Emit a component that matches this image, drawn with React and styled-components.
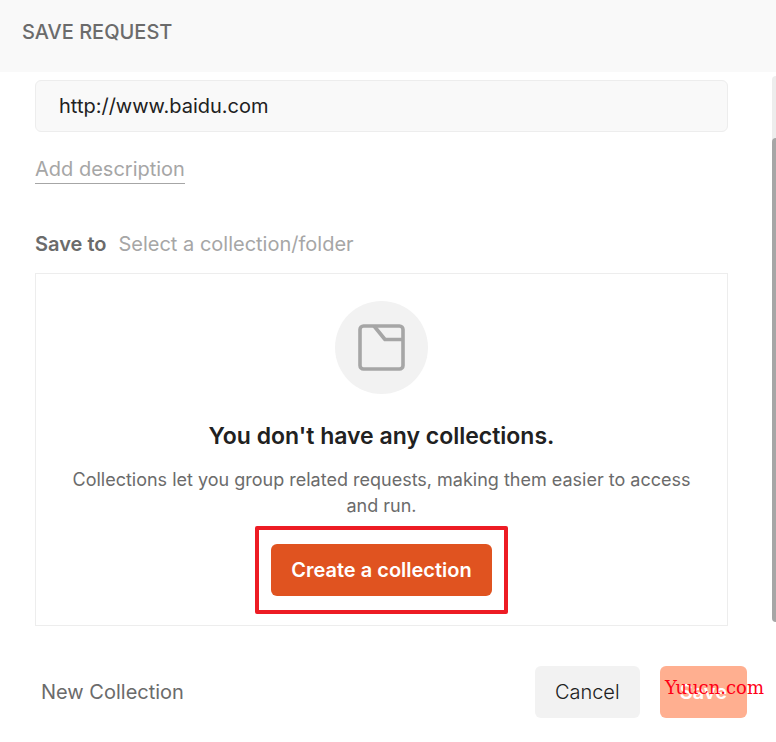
import React from "react";
import styled, { createGlobalStyle } from "styled-components";

const colors = {
	text: "#212121",
	textMuted: "#6b6b6b",
	textLight: "#a6a6a6",
	surface: "#f9f9f9",
	control: "#f2f2f2",
	border: "#ededed",
	brand: "#e05320",
	brandDisabled: "#ffaf90",
	mark: "#ed1c24",
};

const GlobalStyle = createGlobalStyle`
	*, *::before, *::after {
		box-sizing: border-box;
	}

	body {
		margin: 0;
		background: #fff;
		color: ${ colors.text };
		font-family: Inter, "Liberation Sans", sans-serif;
		font-size: 20px;
		line-height: 24px;
	}
`;

const Dialog = styled.main`
	overflow: hidden;
`;

const Header = styled.header`
	padding: 20px 22px 28px;
	background: ${ colors.surface };
`;

const HeaderTitle = styled.h1`
	margin: 0;
	font-size: 20px;
	font-weight: 500;
	line-height: 24px;
	color: ${ colors.textMuted };
`;

const Body = styled.div`
	display: flex;
	align-items: stretch;
`;

const Form = styled.form`
	flex: 1 1 auto;
	min-width: 0;
	padding: 8px 44px 0 35px;
`;

const ScrollTrack = styled.div`
	flex: 0 0 4px;
	display: flex;
	flex-direction: column;
	justify-content: flex-end;
	margin: 4px 0;
	border-radius: 4px 0 0 4px;
	background: ${ colors.border };
`;

const ScrollThumb = styled.div`
	height: calc( 100% - 62px );
	border-radius: 4px 0 0 4px;
	background: ${ colors.textLight };
`;

const NameInput = styled.input`
	display: block;
	width: 100%;
	height: 52px;
	padding: 0 23px;
	border: 1px solid ${ colors.border };
	border-radius: 6px;
	background: ${ colors.surface };
	color: ${ colors.text };
	font: inherit;
`;

const DescriptionButton = styled.button`
	display: block;
	margin: 25px 0 48px;
	padding: 0 0 2px;
	border: 0;
	border-bottom: 1px solid ${ colors.textLight };
	background: transparent;
	color: ${ colors.textLight };
	font: inherit;
	cursor: pointer;
`;

const Destination = styled.div`
	display: flex;
	gap: 12px;
	margin-bottom: 17px;
	color: ${ colors.textLight };
`;

const DestinationLabel = styled.span`
	font-weight: 600;
	color: ${ colors.textMuted };
`;

const EmptyState = styled.section`
	display: flex;
	flex-direction: column;
	align-items: center;
	padding: 27px 24px 11px;
	border: 1px solid ${ colors.border };
	text-align: center;
`;

const IconCircle = styled.div`
	display: grid;
	place-items: center;
	width: 93px;
	height: 93px;
	border-radius: 50%;
	background: ${ colors.control };
`;

const EmptyTitle = styled.h2`
	margin: 28px 0 17px;
	font-size: 23px;
	font-weight: 600;
	line-height: 28px;
`;

const EmptyText = styled.p`
	margin: 0;
	font-size: 18px;
	line-height: 26px;
	color: ${ colors.textMuted };
`;

const Highlight = styled.div`
	margin-top: 7px;
	padding: 14px 12px;
	border: 4px solid ${ colors.mark };
	border-radius: 2px;
`;

const Button = styled.button`
	display: block;
	height: 52px;
	padding: 0 20px;
	border: 0;
	border-radius: 6px;
	background: ${ props => props.$primary ? colors.brand : colors.control };
	color: ${ props => props.$primary ? "#fff" : colors.text };
	font: inherit;
	font-weight: ${ props => props.$primary ? 600 : 300 };
	cursor: pointer;

	&:disabled {
		background: ${ colors.brandDisabled };
		cursor: default;
	}
`;

const Footer = styled.footer`
	display: flex;
	align-items: center;
	gap: 20px;
	padding: 40px 29px 24px 35px;
`;

const NewCollectionButton = styled.button`
	margin-right: auto;
	padding: 0 6px;
	border: 0;
	background: transparent;
	color: ${ colors.textMuted };
	font: inherit;
	cursor: pointer;
`;

const Watermark = styled.span`
	position: absolute;
	right: 12px;
	top: 676px;
	color: #ff0016;
	font-family: "DejaVu Serif", serif;
	font-size: 18px;
	pointer-events: none;
`;

/**
 * Returns the collection icon.
 *
 * @returns {ReactElement} The icon.
 */
function CollectionIcon() {
	return <svg
		width="47"
		height="47"
		viewBox="0 0 47 47"
		fill="none"
		stroke={ colors.textLight }
		strokeWidth="3.6"
		strokeLinejoin="round"
		aria-hidden="true"
	>
		<rect x="2" y="2" width="43" height="43" rx="3.5" />
		<path d="M16 2 L27 15.5 H45" />
	</svg>;
}

/**
 * Returns the message shown when there are no collections to save to.
 *
 * @returns {ReactElement} The empty state.
 */
function NoCollections() {
	return <EmptyState>
		<IconCircle><CollectionIcon /></IconCircle>
		<EmptyTitle>You don't have any collections.</EmptyTitle>
		<EmptyText>
			Collections let you group related requests, making them easier to access and run.
		</EmptyText>
		<Highlight>
			<Button type="button" $primary={ true }>Create a collection</Button>
		</Highlight>
	</EmptyState>;
}

/**
 * Returns the save request dialog.
 *
 * @returns {ReactElement} The dialog.
 */
export default function App() {
	return <Dialog>
		<GlobalStyle />
		<Header>
			<HeaderTitle>SAVE REQUEST</HeaderTitle>
		</Header>
		<Body>
			<Form>
				<NameInput type="text" aria-label="Request name" defaultValue="http://www.baidu.com" />
				<DescriptionButton type="button">Add description</DescriptionButton>
				<Destination>
					<DestinationLabel>Save to</DestinationLabel>
					<span>Select a collection/folder</span>
				</Destination>
				<NoCollections />
			</Form>
			<ScrollTrack>
				<ScrollThumb />
			</ScrollTrack>
		</Body>
		<Footer>
			<NewCollectionButton type="button">New Collection</NewCollectionButton>
			<Button type="button">Cancel</Button>
			<Button type="submit" $primary={ true } disabled={ true }>Save</Button>
		</Footer>
		<Watermark>Yuucn.com</Watermark>
	</Dialog>;
}
